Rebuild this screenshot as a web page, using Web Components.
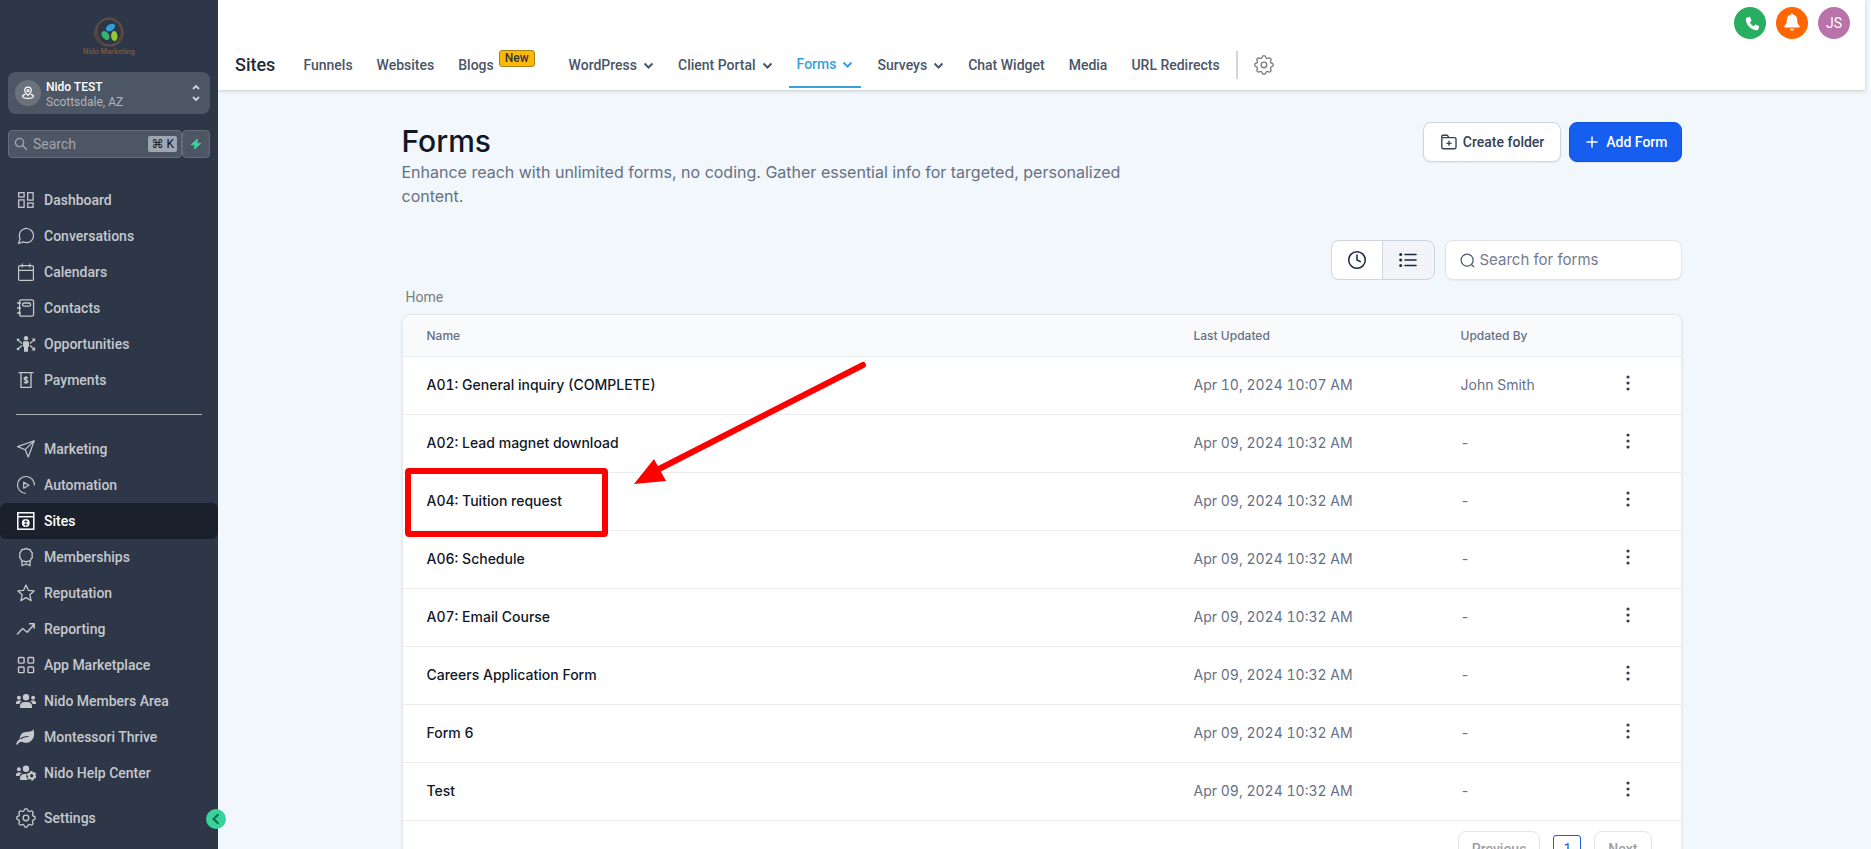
<!DOCTYPE html>
<html lang="en">
<head>
<meta charset="utf-8">
<meta name="viewport" content="width=device-width, initial-scale=1">
<title>Sites - Forms</title>
<style>
  html, body { margin: 0; height: 100%; }
  body { font-family: Roboto, "Liberation Sans", sans-serif; font-size: 14px; background: #f1f7fa; }
</style>
</head>
<body>
<app-shell>
  <side-nav slot="sidebar"></side-nav>
  <top-bar slot="header"></top-bar>
  <forms-page></forms-page>
</app-shell>

<script>
const ICONS = {
  dashboard: '<g fill="none" stroke="currentColor" stroke-width="1.3"><rect x="2.7" y="2.7" width="5.4" height="4.3"/><rect x="11.7" y="2.7" width="5.4" height="7.4"/><rect x="2.7" y="9.9" width="5.4" height="7.4"/><rect x="11.7" y="13" width="5.4" height="4.3"/></g>',
  chat: '<path transform="scale(.8333)" fill="none" stroke="currentColor" stroke-width="1.5" stroke-linejoin="round" d="M21 11.5a8.38 8.38 0 0 1-.9 3.8 8.5 8.5 0 0 1-7.6 4.7 8.38 8.38 0 0 1-3.8-.9L3 21l1.9-5.7a8.38 8.38 0 0 1-.9-3.8 8.5 8.5 0 0 1 4.7-7.6 8.38 8.38 0 0 1 3.8-.9h.5a8.48 8.48 0 0 1 8 8v.5z"/>',
  calendar: '<g fill="none" stroke="currentColor" stroke-width="1.2"><rect x="2.6" y="3.6" width="14.8" height="14.8" rx="1.2"/><path d="M2.6 8.3h14.8M6.2 1.6v4M13.8 1.6v4"/></g>',
  contacts: '<g fill="none" stroke="currentColor" stroke-width="1.3"><rect x="3.6" y="1.8" width="14" height="16.4" rx="1.8"/><rect x="6.6" y="5" width="8" height="3.2" rx="1.4"/><path d="M1 5h4M1 10h4M1 15h4"/></g>',
  opportunities: '<circle cx="10" cy="4.2" r="2.2" fill="currentColor"/><path fill="currentColor" d="M7 8.6Q7 7.2 8.4 7.2h3.2q1.4 0 1.4 1.4v4l-1 .4v4.8H8V13l-1-.4z"/><g fill="none" stroke="currentColor" stroke-width="1.2"><path d="M6 9.500 2 6M6 11.500 2 15M14 9.500 18 6M14 11.500 18 15"/></g><g fill="currentColor"><circle cx="2" cy="5.800" r="1.300"/><circle cx="2" cy="15" r="1.300"/><path d="M15.500 4.500h3.600v3.600zM15.500 16.400h3.600v-3.600z"/></g>',
  payments: '<path fill="none" stroke="currentColor" stroke-width="1.3" d="M2.500 2.700h15M5 2.700v14.700h10V2.700"/><path fill="none" stroke="currentColor" stroke-width="1.3" d="M12 8c-.6-.8-3.900-1-3.900.7 0 1.800 3.900.9 3.900 2.700 0 1.700-3.300 1.500-4 .6M10 6v8"/>',
  send: '<path fill="none" stroke="currentColor" stroke-width="1.2" stroke-linejoin="round" d="M1.600 7.600 18.200 1.700 12.300 18 9.200 10.700zM9.200 10.700 18.200 1.700"/>',
  automation: '<path fill="none" stroke="currentColor" stroke-width="1.2" d="M18.500 10.500A8.500 8.500 0 1 0 10 18.500" /><path fill="none" stroke="currentColor" stroke-width="1.2" stroke-linejoin="round" d="m7.700 7.200 5.200 3-5.200 3z"/>',
  sites: '<g fill="none" stroke="currentColor" stroke-width="1.500"><rect x="1.800" y="1.800" width="16" height="16.400"/><path d="M1.800 5.700h16"/></g><circle cx="9.800" cy="12" r="3.900" fill="currentColor"/><path d="M8 10.600h3.600M8 13.400h3.600M9.800 8.500v7" stroke="#1a202c" stroke-width=".8" fill="none"/>',
  award: '<g fill="none" stroke="currentColor" stroke-width="1.300"><path stroke-linejoin="round" d="m10 1.400 1.900 1 2.200.1.900 2 1.400 1.600-.4 2.100.4 2.200-1.400 1.600-.9 2-2.200.1-1.900 1-1.900-1-2.200-.1-.9-2-1.400-1.600.4-2.200-.4-2.100L5 4.500l.9-2 2.200-.1z"/><path d="M6 13.800v4.800l4-1.600 4 1.600v-4.800"/></g>',
  star: '<path fill="none" stroke="currentColor" stroke-width="1.300" stroke-linejoin="round" d="m10 2 2.400 5.300 5.700.6-4.300 3.900 1.300 5.800-5.100-3-5.100 3 1.300-5.800L1.900 7.900l5.700-.6z"/>',
  trend: '<path fill="none" stroke="currentColor" stroke-width="1.400" stroke-linejoin="round" d="m1 15.500 5.600-6 4.600 3.800 7-8M13 4.800h5.200v5"/>',
  apps: '<g fill="none" stroke="currentColor" stroke-width="1.400"><rect x="2.500" y="2.500" width="5.600" height="5.600" rx=".8"/><rect x="12" y="2.500" width="5.600" height="5.600" rx=".8"/><rect x="2.500" y="12" width="5.600" height="5.600" rx=".8"/><rect x="12" y="12" width="5.600" height="5.600" rx=".8"/></g>',
  users: '<g fill="currentColor"><circle cx="10" cy="6.200" r="3.200"/><circle cx="2.900" cy="6.700" r="2"/><circle cx="17.100" cy="6.700" r="2"/><path d="M4 17v-1.800a4.200 4.200 0 0 1 4.200-4.200h3.600A4.200 4.200 0 0 1 16 15.200V17zM0 13v-1a2.500 2.500 0 0 1 2.500-2.500h1.700q.8 0 1.500.6A5.500 5.500 0 0 0 3.400 13zM20 13v-1a2.500 2.500 0 0 0-2.500-2.500h-1.700q-.8 0-1.500.6a5.500 5.500 0 0 1 2.300 2.900z"/></g>',
  leaf: '<path fill="currentColor" d="M17.300 2.200c1.600 4 1 9.400-2.600 12-2.800 2-6.300 1.900-8.900.6-1.900 0-3.400 1.300-4.300 3-.9.200-1.500-.3-1.300-1.100.8-2 2-3.400 3.500-4.400C4 7 6.500 5 10 4.900c3.200-.1 5.800-.4 7.300-2.700z"/><path fill="none" stroke="#2d3748" stroke-width="1.200" stroke-linecap="round" d="M5 11.600c2-1.500 4.100-2.100 7-2.100"/>',
  usersGear: '<g fill="currentColor"><circle cx="10" cy="5.800" r="3.200"/><circle cx="2.900" cy="6.300" r="2"/><path d="M4 17v-1.800a4.200 4.200 0 0 1 4.200-4.200h2.600c-.8 2-.3 4.500 1.200 6zM0 13v-1a2.500 2.500 0 0 1 2.500-2.500h1.700q.8 0 1.500.6A5.500 5.500 0 0 0 3.400 13z"/></g><circle cx="15.700" cy="12.800" r="2.700" fill="none" stroke="currentColor" stroke-width="2"/><circle cx="15.700" cy="12.800" r="4" fill="none" stroke="currentColor" stroke-width="1.600" stroke-dasharray="2.300 1.900"/>',
  gear: '<g transform="translate(-2.400 -2.400) scale(1.030)" fill="none" stroke="currentColor" stroke-width="1.300"><path d="M10.325 4.317c.426-1.756 2.924-1.756 3.350 0a1.724 1.724 0 002.573 1.066c1.543-.94 3.310.826 2.370 2.370a1.724 1.724 0 001.065 2.572c1.756.426 1.756 2.924 0 3.350a1.724 1.724 0 00-1.066 2.573c.94 1.543-.826 3.310-2.370 2.370a1.724 1.724 0 00-2.572 1.065c-.426 1.756-2.924 1.756-3.350 0a1.724 1.724 0 00-2.573-1.066c-1.543.94-3.310-.826-2.370-2.370a1.724 1.724 0 00-1.065-2.572c-1.756-.426-1.756-2.924 0-3.350a1.724 1.724 0 001.066-2.573c-.94-1.543.826-3.310 2.370-2.370.996.608 2.296.07 2.572-1.065z"/><circle cx="12" cy="12" r="2.700"/></g>',
  pin: '<g fill="none" stroke="currentColor" stroke-width="1.700"><path d="M10 13.500C7 10.500 5.300 8.800 5.300 6.400a4.700 4.700 0 0 1 9.400 0c0 2.400-1.700 4.100-4.700 7.100z"/><circle cx="10" cy="6.500" r="1.500"/><path stroke-linecap="round" d="M5.500 12C.5 13.500 1 17.800 10 17.800s9.500-4.300 4.500-5.800"/></g>',
  updown: '<path fill="none" stroke="currentColor" stroke-width="1.800" d="m7 6 3-3 3 3M7 14l3 3 3-3"/>',
  magnifier: '<path fill="none" stroke="currentColor" stroke-width="2" stroke-linecap="round" d="M12.300 12.300 18 18"/><circle cx="7.900" cy="7.900" r="5.900" fill="none" stroke="currentColor" stroke-width="1.900"/>',
  search: '<circle cx="9.500" cy="9.500" r="8" fill="none" stroke="currentColor" stroke-width="1.600"/><path fill="none" stroke="currentColor" stroke-width="1.600" stroke-linecap="round" d="m15.500 15.500 2.800 2.800"/>',
  bolt: '<path fill="currentColor" stroke="currentColor" stroke-width="1.500" stroke-linejoin="round" d="M12.500 1.500 2 11.200h6.500L7.500 18.500 18 8.800h-6.500z"/>',
  chevron: '<path fill="none" stroke="currentColor" stroke-width="3.600" d="m2.800 6.500 7.200 7.200 7.200-7.200"/>',
  back: '<path fill="none" stroke="currentColor" stroke-width="3.600" d="M14 2 6 10l8 8"/>',
  phone: '<path fill="currentColor" d="M5.300 1.200 2.600 2.100C1.400 2.500 1 3.600 1.100 4.800c.8 7.700 6.400 13.300 14 14.100 1.300.1 2.300-.4 2.700-1.600l.9-2.700c.2-.7-.1-1.300-.7-1.600l-3.400-1.500c-.6-.3-1.200-.1-1.600.4l-1.300 1.600a10 10 0 0 1-5.200-5.200L8.100 7c.5-.4.7-1 .4-1.600L7 1.900c-.3-.6-1-.9-1.700-.7z"/>',
  bell: '<path fill="currentColor" d="M10 .5c-.8 0-1.200.5-1.200 1.300C5.700 2.400 4.200 4.700 4.200 8c0 3.500-.8 4.700-2.400 6.200-.8.900-.3 2 .8 2h14.800c1.100 0 1.600-1.100.8-2-1.600-1.500-2.400-2.700-2.400-6.200 0-3.300-1.500-5.600-4.600-6.200C11.200 1 10.800.5 10 .5zM7.500 17.600h5c-.3 2.600-4.700 2.600-5 0z"/>',
  folderPlus: '<g fill="none" stroke="currentColor" stroke-width="1.500" stroke-linejoin="round"><path d="M2 15.700V3.500q0-1 1-1h4.500q.8 0 1.200.7l1 2h6.500q1.600 0 1.600 1.600v8.900q0 1.800-1.800 1.800H3.800Q2 17.500 2 15.700M2 5.200h7.700"/><path d="M10 8.700v5.600M7.200 11.500h5.600"/></g>',
  plus: '<path fill="none" stroke="currentColor" stroke-width="1.700" stroke-linecap="round" d="M10 4.500v11M4.500 10h11"/>',
  clock: '<circle cx="10" cy="10" r="8.300" fill="none" stroke="currentColor" stroke-width="1.500"/><path fill="none" stroke="currentColor" stroke-width="1.500" stroke-linecap="round" stroke-linejoin="round" d="M10 5v5l3.300 1.700"/>',
  list: '<path fill="none" stroke="currentColor" stroke-width="1.600" stroke-linecap="round" d="M7 4.500h11M7 10h11M7 15.500h11"/><g fill="currentColor"><circle cx="2.700" cy="4.500" r="1.500"/><circle cx="2.700" cy="10" r="1.500"/><circle cx="2.700" cy="15.500" r="1.500"/></g>',
  dots: '<g fill="currentColor"><circle cx="10" cy="4" r="1.600"/><circle cx="10" cy="10" r="1.600"/><circle cx="10" cy="16" r="1.600"/></g>'
};

class UiIcon extends HTMLElement {
  static observedAttributes = ['name'];
  constructor() {
    super();
    this.attachShadow({ mode: 'open' }).innerHTML = `
      <style>
        :host { display: inline-flex; flex: none; width: 20px; height: 20px; }
        svg { width: 100%; height: 100%; display: block; }
      </style>
      <svg viewBox="0 0 20 20" aria-hidden="true"></svg>`;
  }
  attributeChangedCallback(attribute, previous, name) {
    this.shadowRoot.querySelector('svg').innerHTML = ICONS[name] || '';
  }
}
customElements.define('ui-icon', UiIcon);

function define(tag, markup, setup) {
  const template = document.createElement('template');
  template.innerHTML = markup;
  customElements.define(tag, class extends HTMLElement {
    connectedCallback() {
      if (this.shadowRoot) return;
      const root = this.attachShadow({ mode: 'open' });
      root.append(template.content.cloneNode(true));
      if (setup) setup(this, root);
    }
  });
}

define('app-shell', `
  <style>
    :host { display: grid; grid-template-columns: 218px minmax(0, 1fr); height: 100vh; overflow: hidden; background: #f1f7fa; }
    .content { display: flex; flex-direction: column; min-height: 0; padding-right: 6px; }
    main { flex: 1; min-height: 0; overflow-y: auto; scrollbar-width: none; }
  </style>
  <slot name="sidebar"></slot>
  <div class="content">
    <slot name="header"></slot>
    <main><slot></slot></main>
  </div>`);

define('brand-logo', `
  <style>
    :host { display: flex; flex-direction: column; align-items: center; color: #7d5638; font: 600 7px/8px Inter, sans-serif; }
    svg { width: 32px; height: 31px; display: block; }
  </style>
  <svg viewBox="0 0 32 31" aria-hidden="true">
    <g fill="none" stroke="#76523a" stroke-width=".6">
      <ellipse cx="16" cy="15.500" rx="14.500" ry="13.500"/><ellipse cx="15.500" cy="15" rx="13" ry="14.500" transform="rotate(30 16 15)"/>
      <ellipse cx="16.500" cy="16" rx="12.500" ry="14" transform="rotate(-35 16 15)"/><ellipse cx="16" cy="15" rx="13.500" ry="12.500" transform="rotate(60 16 15)"/>
    </g>
    <ellipse cx="17.500" cy="10.500" rx="5" ry="3.300" fill="#2d9fdc" transform="rotate(-32 17.500 10.500)"/>
    <ellipse cx="12.500" cy="18.500" rx="5" ry="3.400" fill="#35b36c" transform="rotate(52 12.500 18.500)"/>
    <ellipse cx="21.300" cy="19" rx="3.200" ry="5" fill="#93c83d" transform="rotate(-5 21.300 19)"/>
  </svg>
  <span>Nido Marketing</span>`);

define('account-switcher', `
  <style>
    :host { display: block; }
    button { display: flex; align-items: center; gap: 5px; width: 100%; height: 42px; padding: 0 4px 0 7px; border: 0; border-radius: 8px;
      background: #4d5665; color: #fff; font: 12px/15px Roboto, sans-serif; text-align: left; }
    .avatar { display: grid; place-items: center; width: 26px; height: 26px; border-radius: 50%; background: #6b727e; }
    .avatar ui-icon { width: 14px; height: 14px; }
    .label { flex: 1; padding-top: 3px; }
    .name, .place { display: block; }
    .name { font-weight: 500; }
    .place { color: #b0b5bd; }
    .arrows { color: #d0d3d8; }
  </style>
  <button type="button">
    <span class="avatar"><ui-icon name="pin"></ui-icon></span>
    <span class="label"><span class="name">Nido TEST</span><span class="place">Scottsdale, AZ</span></span>
    <ui-icon class="arrows" name="updown"></ui-icon>
  </button>`);

define('quick-search', `
  <style>
    :host { display: flex; }
    label, button { box-sizing: border-box; height: 28px; border: 1px solid #656d7a; border-radius: 4px; background: #4d5665; }
    label { flex: 1; min-width: 0; display: flex; align-items: center; gap: 5px; padding: 0 4px 0 5px; color: #a0a6b0; }
    label ui-icon { width: 14px; height: 14px; }
    input { flex: 1; min-width: 0; border: 0; padding: 0; background: none; outline: none; font: 14px/18px Roboto, sans-serif; color: #fff; }
    input::placeholder { color: #a0a6b0; opacity: 1; }
    kbd { padding: 0 3px; border-radius: 2px; background: #a0a5b2; color: #10131a; font: 12px/16px Roboto, "DejaVu Sans", sans-serif; white-space: nowrap; }
    button { display: grid; place-items: center; width: 28px; padding: 0; color: #3ad29f; }
    button ui-icon { width: 12px; height: 12px; }
  </style>
  <label><ui-icon name="magnifier"></ui-icon><input type="text" placeholder="Search" aria-label="Search"><kbd>⌘ K</kbd></label>
  <button type="button" aria-label="Quick actions"><ui-icon name="bolt"></ui-icon></button>`);

define('nav-item', `
  <style>
    :host { display: block; }
    a { display: flex; align-items: center; gap: 8px; height: 36px; padding-left: 16px; border-radius: 6px; color: #c5c8cc;
      font: 500 14px/20px Roboto, sans-serif; text-decoration: none; }
    :host([active]) a { background: #1a202c; color: #fff; }
  </style>
  <a href="#"><ui-icon></ui-icon><slot></slot></a>`,
  (el, root) => root.querySelector('ui-icon').setAttribute('name', el.getAttribute('icon')));

define('side-nav', `
  <style>
    :host { display: block; position: relative; z-index: 2; background: #2d3748; }
    .top { display: flex; flex-direction: column; gap: 16px; padding: 17px 8px 0; }
    nav { padding-top: 24px; }
    hr { height: 1px; margin: 16px; border: 0; background: #a8adb5; }
    .settings { margin-top: 9px; }
    .collapse { position: absolute; right: -8px; bottom: 20px; display: grid; place-items: center; width: 20px; height: 20px; padding: 0; border: 0;
      border-radius: 50%; background: #37d39b; color: #0c6b4a; }
    .collapse ui-icon { width: 12px; height: 12px; }
  </style>
  <div class="top">
    <brand-logo></brand-logo>
    <account-switcher></account-switcher>
    <quick-search></quick-search>
  </div>
  <nav aria-label="Main">
    <nav-item icon="dashboard">Dashboard</nav-item>
    <nav-item icon="chat">Conversations</nav-item>
    <nav-item icon="calendar">Calendars</nav-item>
    <nav-item icon="contacts">Contacts</nav-item>
    <nav-item icon="opportunities">Opportunities</nav-item>
    <nav-item icon="payments">Payments</nav-item>
    <hr>
    <nav-item icon="send">Marketing</nav-item>
    <nav-item icon="automation">Automation</nav-item>
    <nav-item icon="sites" active>Sites</nav-item>
    <nav-item icon="award">Memberships</nav-item>
    <nav-item icon="star">Reputation</nav-item>
    <nav-item icon="trend">Reporting</nav-item>
    <nav-item icon="apps">App Marketplace</nav-item>
    <nav-item icon="users">Nido Members Area</nav-item>
    <nav-item icon="leaf">Montessori Thrive</nav-item>
    <nav-item icon="usersGear">Nido Help Center</nav-item>
    <nav-item class="settings" icon="gear">Settings</nav-item>
  </nav>
  <button class="collapse" type="button" aria-label="Collapse sidebar"><ui-icon name="back"></ui-icon></button>`);

define('tab-link', `
  <style>
    :host { display: block; }
    a { box-sizing: border-box; display: flex; align-items: center; gap: 6px; height: 46px; padding: 0 8px; color: #4a5568;
      font: 500 14px/20px Roboto, sans-serif; text-decoration: none; white-space: nowrap; }
    ui-icon { width: 11px; height: 11px; display: none; }
    :host([menu]) ui-icon { display: block; }
    :host([active]) a { color: #3a9fdb; border-bottom: 2px solid #3a9fdb; }
  </style>
  <a href="#"><slot></slot><ui-icon name="chevron"></ui-icon></a>`);

define('top-bar', `
  <style>
    :host { display: block; position: relative; z-index: 1; background: #fff; box-shadow: 0 1px 4px rgba(0, 0, 0, .18); }
    .actions { display: flex; justify-content: flex-end; gap: 10px; padding: 7px 15px 3px; }
    .actions button { display: grid; place-items: center; width: 32px; height: 32px; padding: 0; border: 0; border-radius: 50%; color: #fff;
      font: 14px/20px Roboto, sans-serif; }
    .call { background: #27ae60; }
    .call ui-icon { width: 15px; height: 15px; margin: 0 0 0 4px; }
    .alerts { background: #ff6600; }
    .alerts ui-icon { width: 18px; height: 18px; margin: 0 0 2px; }
    .user { background: #b973a8; }
    nav { display: flex; align-items: center; gap: 8px; padding: 0 17px 2px; }
    h1 { margin: 0 12px 0 0; color: #1f2937; font: 500 18px/24px Roboto, sans-serif; }
    .badge { position: relative; margin: 0 18px 14px -11px; padding: 0 5px; border: 1px solid #a8811a; border-radius: 3px; background: #fdb706;
      color: #2d3748; font: 500 12px/15px Roboto, sans-serif; }
    .rule { width: 2px; height: 28px; background: #d4d5da; margin: 0 8px 0 0; }
    .gear { display: grid; padding: 0; border: 0; background: none; color: #7a7a7a; }
  </style>
  <div class="actions">
    <button class="call" type="button" aria-label="Call"><ui-icon name="phone"></ui-icon></button>
    <button class="alerts" type="button" aria-label="Notifications"><ui-icon name="bell"></ui-icon></button>
    <button class="user" type="button">JS</button>
  </div>
  <nav aria-label="Sites">
    <h1>Sites</h1>
    <tab-link>Funnels</tab-link>
    <tab-link>Websites</tab-link>
    <tab-link>Blogs</tab-link>
    <span class="badge">New</span>
    <tab-link menu>WordPress</tab-link>
    <tab-link menu>Client Portal</tab-link>
    <tab-link menu active>Forms</tab-link>
    <tab-link menu>Surveys</tab-link>
    <tab-link>Chat Widget</tab-link>
    <tab-link>Media</tab-link>
    <tab-link>URL Redirects</tab-link>
    <span class="rule"></span>
    <button class="gear" type="button" aria-label="Site settings"><ui-icon name="gear"></ui-icon></button>
  </nav>`);

define('action-button', `
  <style>
    :host { display: block; }
    button { box-sizing: border-box; display: flex; align-items: center; gap: 5px; height: 40px; padding: 0 16px; border: 1px solid #d0d5dd; border-radius: 8px;
      background: #fff; color: #344054; font: 500 14px/20px Roboto, sans-serif; box-shadow: 0 1px 2px rgba(16, 24, 40, .06); white-space: nowrap; }
    ui-icon { width: 18px; height: 18px; }
    :host([primary]) button { padding: 0 13px; background: #155eef; border-color: #0f52dc; color: #fff; }
  </style>
  <button type="button"><ui-icon></ui-icon><slot></slot></button>`,
  (el, root) => root.querySelector('ui-icon').setAttribute('name', el.getAttribute('icon')));

define('view-switch', `
  <style>
    :host { display: flex; }
    button { box-sizing: border-box; display: grid; place-items: center; width: 52px; height: 40px; padding: 0; border: 1px solid #d0d5dd;
      border-radius: 8px 0 0 8px; background: #fff; color: #1d2939; }
    button + button { width: 53px; margin-left: -1px; border-radius: 0 8px 8px 0; background: #f2f4f7; }
  </style>
  <button type="button" aria-label="Recent"><ui-icon name="clock"></ui-icon></button>
  <button type="button" aria-label="List" aria-pressed="true"><ui-icon name="list"></ui-icon></button>`);

define('form-search', `
  <style>
    :host { display: block; width: 237px; }
    label { box-sizing: border-box; display: flex; align-items: center; gap: 5px; height: 40px; padding: 0 14px; border: 1px solid #e0e3e8; border-radius: 8px;
      background: #fff; color: #475467; box-shadow: 0 1px 2px rgba(16, 24, 40, .05); }
    ui-icon { width: 15px; height: 15px; }
    input { flex: 1; min-width: 0; padding: 0; border: 0; outline: none; background: none; font: 15px/22px Inter, sans-serif; color: #101828; }
    input::placeholder { color: #737b8d; opacity: 1; }
  </style>
  <label><ui-icon name="search"></ui-icon><input type="text" placeholder="Search for forms" aria-label="Search for forms"></label>`);

define('row-callout', `
  <style>
    :host { position: absolute; z-index: 1; left: 2px; top: -5px; pointer-events: none; }
    svg { display: block; width: 464px; height: 176px; margin-top: -107px; overflow: visible; }
  </style>
  <svg viewBox="0 0 464 176" aria-hidden="true">
    <rect x="3" y="110" width="197" height="63" rx="1" fill="none" stroke="#fe0000" stroke-width="6" stroke-linejoin="round"/>
    <path d="M458 4 252 109" fill="none" stroke="#fe0000" stroke-width="6" stroke-linecap="round"/>
    <path d="M229 123 249 98 261 120z" fill="#fe0000"/>
  </svg>`);

define('forms-table', `
  <style>
    :host { display: block; border: 1px solid #e6e9ed; border-radius: 8px; background: #fff; box-shadow: 0 1px 3px rgba(16, 24, 40, .1); font-family: Inter, sans-serif; }
    table { width: 100%; table-layout: fixed; border-collapse: separate; border-spacing: 0; }
    th, td { position: relative; box-sizing: border-box; padding: 0 24px; border-bottom: 1px solid #eaecf0; text-align: left; color: #667085; }
    th { height: 42px; background: #f9fafc; font-size: 12px; line-height: 18px; font-weight: 500; }
    th:first-child { border-top-left-radius: 8px; }
    th:last-child { border-top-right-radius: 8px; }
    td { height: 58px; padding-bottom: 2px; font-size: 14px; line-height: 20px; font-variant-numeric: tabular-nums; }
    td a { color: #101828; font-weight: 500; text-decoration: none; }
    .updated { width: 267px; }
    .by { width: 157px; }
    .menu { width: 87px; }
    td button { display: grid; margin: 0; padding: 0 0 4px; border: 0; background: none; color: #344054; }
  </style>
  <table>
    <thead><tr><th>Name</th><th class="updated">Last Updated</th><th class="by">Updated By</th><th class="menu"></th></tr></thead>
    <tbody></tbody>
  </table>
  <slot></slot>`,
  (el, root) => {
    const rows = [
      ['A01: General inquiry (COMPLETE)', 'Apr 10, 2024 10:07 AM', 'John Smith'],
      ['A02: Lead magnet download'],
      ['A04: Tuition request'],
      ['A06: Schedule'],
      ['A07: Email Course'],
      ['Careers Application Form'],
      ['Form 6'],
      ['Test']
    ];
    root.querySelector('tbody').innerHTML = rows.map(([name, date = 'Apr 09, 2024 10:32 AM', by = '-']) => `
      <tr><td><a href="#">${name}</a>${name.startsWith('A04') ? '<row-callout></row-callout>' : ''}</td><td>${date}</td><td>${by}</td>
      <td><button type="button" aria-label="Actions for ${name}"><ui-icon name="dots"></ui-icon></button></td></tr>`).join('');
  });

define('page-pager', `
  <style>
    :host { display: flex; justify-content: flex-end; align-items: center; gap: 13px; padding: 10px 29px; }
    button { box-sizing: border-box; height: 36px; padding: 0 13px; border: 1px solid #e4e5ea; border-radius: 8px; background: #fff; color: #9b9ea6;
      font: 500 14px/20px Roboto, sans-serif; }
    .page { width: 28px; height: 28px; padding: 0; border-color: #155eef; border-radius: 3px; color: #155eef; font-weight: 400; }
  </style>
  <button type="button">Previous</button>
  <button class="page" type="button" aria-current="page">1</button>
  <button type="button">Next</button>`);

define('forms-page', `
  <style>
    :host { display: block; max-width: 1280px; margin: 0 auto; padding: 32px 24px; font-family: Inter, sans-serif; }
    .head { display: flex; justify-content: space-between; align-items: flex-start; }
    .intro { max-width: 740px; }
    h2 { margin: 0; color: #101828; font-size: 30px; line-height: 38px; font-weight: 500; }
    p { margin: 0; color: #667085; font-size: 16px; line-height: 24px; }
    .buttons { display: flex; gap: 8px; }
    .tools { display: flex; justify-content: flex-end; gap: 10px; margin-top: 32px; }
    .crumb { margin: 8px 0 8px 4px; font: 14px/18px Roboto, sans-serif; }
    .crumb a { color: #7a7c80; text-decoration: none; }
  </style>
  <div class="head">
    <div class="intro">
      <h2>Forms</h2>
      <p>Enhance reach with unlimited forms, no coding. Gather essential info for targeted, personalized content.</p>
    </div>
    <div class="buttons">
      <action-button icon="folderPlus">Create folder</action-button>
      <action-button icon="plus" primary>Add Form</action-button>
    </div>
  </div>
  <div class="tools"><view-switch></view-switch><form-search></form-search></div>
  <div class="crumb"><a href="#">Home</a></div>
  <forms-table><page-pager></page-pager></forms-table>`);
</script>
</body>
</html>
